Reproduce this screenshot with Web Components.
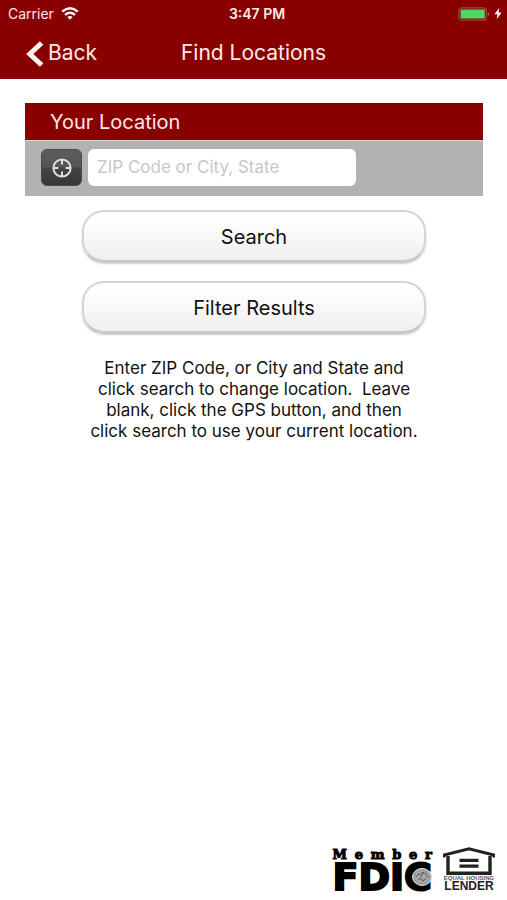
<!DOCTYPE html>
<html lang="en">
<head>
<meta charset="utf-8">
<meta name="viewport" content="width=device-width, initial-scale=1">
<title>Find Locations</title>
<style>
  body {
    margin: 0;
    background: #fff;
    color: #111;
    font-family: Inter, "Liberation Sans", sans-serif;
    --brand: #880000;
    --on-brand: #ffe9e6;
  }
</style>
</head>
<body>
<bank-screen>
  <status-bar slot="top" carrier="Carrier" time="3:47 PM"></status-bar>
  <nav-header slot="top" back="Back">Find Locations</nav-header>
  <location-panel heading="Your Location"></location-panel>
  <button-stack>
    <soft-button>Search</soft-button>
    <soft-button>Filter Results</soft-button>
  </button-stack>
  <help-text>Enter ZIP Code, or City and State and<br>click search to change location.&nbsp; Leave<br>blank, click the GPS button, and then<br>click search to use your current location.</help-text>
  <fdic-logo slot="bottom"></fdic-logo>
  <lender-logo slot="bottom"></lender-logo>
</bank-screen>

<script>
function define(name, markup, setup) {
  customElements.define(name, class extends HTMLElement {
    constructor() {
      super();
      const template = document.createElement('template');
      template.innerHTML = markup;
      this.attachShadow({ mode: 'open' }).append(template.content.cloneNode(true));
    }
    connectedCallback() { if (setup) setup(this, this.shadowRoot); }
  });
}

define('bank-screen', `
  <style>
    :host { display: flex; flex-direction: column; min-height: 100vh; }
    header { background: var(--brand); color: var(--on-brand); }
    main { flex: 1; padding: 24px 24px 0 25px; }
    footer { display: flex; justify-content: flex-end; align-items: flex-end; gap: 11px; padding: 0 12px 8px; }
  </style>
  <header><slot name="top"></slot></header>
  <main><slot></slot></main>
  <footer><slot name="bottom"></slot></footer>`);

define('status-bar', `
  <style>
    :host { display: grid; grid-template-columns: 1fr auto 1fr; align-items: center; height: 27px; padding: 0 5px 0 8px; font-size: 14px; }
    div { display: flex; align-items: center; gap: 7px; }
    .time { font-weight: 600; padding-left: 4px; }
    .power { justify-content: flex-end; gap: 4px; }
    svg { display: block; }
  </style>
  <div><span class="carrier"></span>
    <svg width="18" height="13" viewBox="0 0 18 13" fill="none" stroke="#fff" stroke-width="2.3" aria-label="Wi-Fi">
      <path d="M1.2 4.6 Q9 -2 16.8 4.6M4 7.8 Q9 3.6 14 7.8"/>
      <path d="M6.3 10 Q9 7.9 11.7 10 L9 12.7Z" fill="#fff" stroke="none"/>
    </svg>
  </div>
  <span class="time"></span>
  <div class="power">
    <svg width="32" height="14" viewBox="0 0 32 14" aria-label="Battery charging">
      <rect x="1" y=".8" width="27.4" height="12.4" rx="3" fill="none" stroke="#a8483e" stroke-width="1.2"/>
      <rect x="2.6" y="2.4" width="24.2" height="9.2" rx="1" fill="#4cd964"/>
      <path d="M29.8 4.8 Q31.4 5.2 31.4 7 T29.8 9.2Z" fill="#a8483e"/>
    </svg>
    <svg width="8" height="13" viewBox="0 0 8 13" fill="#fff"><path d="M5.3 .8 .4 7.3H3.5L2.6 12.2 7.6 5.6H4.5Z"/></svg>
  </div>`,
  (host, root) => {
    root.querySelector('.carrier').textContent = host.getAttribute('carrier');
    root.querySelector('.time').textContent = host.getAttribute('time');
  });

define('nav-header', `
  <style>
    :host { display: grid; grid-template-columns: 1fr auto 1fr; align-items: center; height: 52px; padding: 0 26px; font-size: 21px; line-height: 24px; }
    a { display: flex; align-items: center; gap: 4px; color: inherit; text-decoration: none; height: 50px; }
    h1 { margin: 0; font: inherit; }
    svg { display: block; margin-top: 2px; }
  </style>
  <a href="#"><svg width="18" height="26" viewBox="0 0 18 26" fill="none" stroke="#fff5f3" stroke-width="5"><path d="M15.6 2 3.8 13 15.6 24"/></svg><span></span></a>
  <h1><slot></slot></h1>`,
  (host, root) => { root.querySelector('span').textContent = host.getAttribute('back'); });

define('location-panel', `
  <style>
    :host { display: block; }
    h2 { margin: 0; padding: 1px 25px 0; font-size: 20px; line-height: 36px; font-weight: 400; color: var(--on-brand); background: var(--brand); }
    form { display: flex; align-items: center; gap: 6px; padding: 8px 16px 10px; border-top: 1px solid #e2cfcf; background: #b2b2b2; }
    button { flex: none; display: grid; place-items: center; width: 41px; height: 37px; padding: 0; border: 1px solid #4b4b4b; border-radius: 6px; background: linear-gradient(#5c5c5c, #555 48%, #434343 52%, #383838); }
    input { flex: 0 1 268px; min-width: 0; box-sizing: border-box; height: 37px; padding: 0 9px 2px; border: 0; border-radius: 6px; background: #fff; font: inherit; font-size: 17px; color: #111; }
    input::placeholder { color: #c7c7c9; opacity: 1; }
  </style>
  <h2></h2>
  <form>
    <button type="button" aria-label="Use GPS location">
      <svg width="22" height="22" viewBox="0 0 22 22" fill="none" stroke="#dedede">
        <circle cx="11" cy="11" r="8.6" stroke-width="2"/>
        <path d="M11 2V7.4M11 14.6V20M2 11H7.4M14.6 11H20" stroke-width="2"/>
      </svg>
    </button>
    <input type="text" placeholder="ZIP Code or City, State" aria-label="ZIP Code or City, State">
  </form>`,
  (host, root) => { root.querySelector('h2').textContent = host.getAttribute('heading'); });

define('button-stack', `
  <style>
    :host { display: flex; flex-direction: column; gap: 18px; width: 75%; margin: 14px auto 0; }
  </style>
  <slot></slot>`);

define('soft-button', `
  <style>
    :host { display: block; }
    button { display: block; width: 100%; height: 53px; padding: 2px 0 0; border: 2px solid #d4d4d4; border-bottom: 3px solid #c8c8c8; border-radius: 22px; background: linear-gradient(#fff, #fcfcfc 30%, #eee); box-shadow: 0 1px 2px #ccc; font: inherit; font-size: 20px; color: #111; }
  </style>
  <button type="button"><slot></slot></button>`);

define('help-text', `
  <style>
    :host { display: block; margin-top: 24px; text-align: center; font-size: 17px; line-height: 21px; }
    p { margin: 0; }
  </style>
  <p><slot></slot></p>`);

define('fdic-logo', `
  <style>
    :host { display: block; color: #000; }
    .member { display: flex; justify-content: space-between; font: bold 13px/14px "DejaVu Serif", serif; -webkit-text-stroke: 1px #000; }
    .fdic { position: relative; font: bold 38px/30px "DejaVu Sans", sans-serif; -webkit-text-stroke: 2px #000; }
    svg { position: absolute; right: 0; bottom: 6px; }
  </style>
  <div class="member"><span>M</span><span>e</span><span>m</span><span>b</span><span>e</span><span>r</span></div>
  <div class="fdic">FDIC
    <svg width="20" height="18" viewBox="0 0 20 18">
      <ellipse cx="10" cy="9" rx="9.5" ry="8.5" fill="#aaa" stroke="#ddd"/>
      <ellipse cx="10" cy="9" rx="7.6" ry="6.6" fill="none" stroke="#777" stroke-dasharray="1 1"/>
      <path d="M4 9 7 5.5 9.5 8 10.5 5.5 13 5 16 9.5M6 12 8.5 10 11 13 14 10.5M9 4.5H12" fill="none" stroke="#666" stroke-width="1.1"/>
    </svg>
  </div>`);

define('lender-logo', `
  <style>
    :host { display: flex; flex-direction: column; align-items: center; color: #222; font-family: "Liberation Sans", sans-serif; font-weight: bold; }
    svg { display: block; }
    .equal { font-size: 6px; line-height: 6px; color: #555; }
    .lender { font-size: 12px; line-height: 11px; }
  </style>
  <svg width="52" height="28" viewBox="0 0 52 28" fill="none" stroke="#222">
    <path d="M5 9V26.2H47V9" stroke-width="3.4"/>
    <path d="M1 10.4V8L26 1.8 51 8V10.4" stroke-width="3"/>
    <path d="M16.5 13.3H35.5M16.5 19.2H35.5" stroke-width="3.2"/>
  </svg>
  <span class="equal">EQUAL HOUSING</span>
  <span class="lender">LENDER</span>`);
</script>
</body>
</html>
